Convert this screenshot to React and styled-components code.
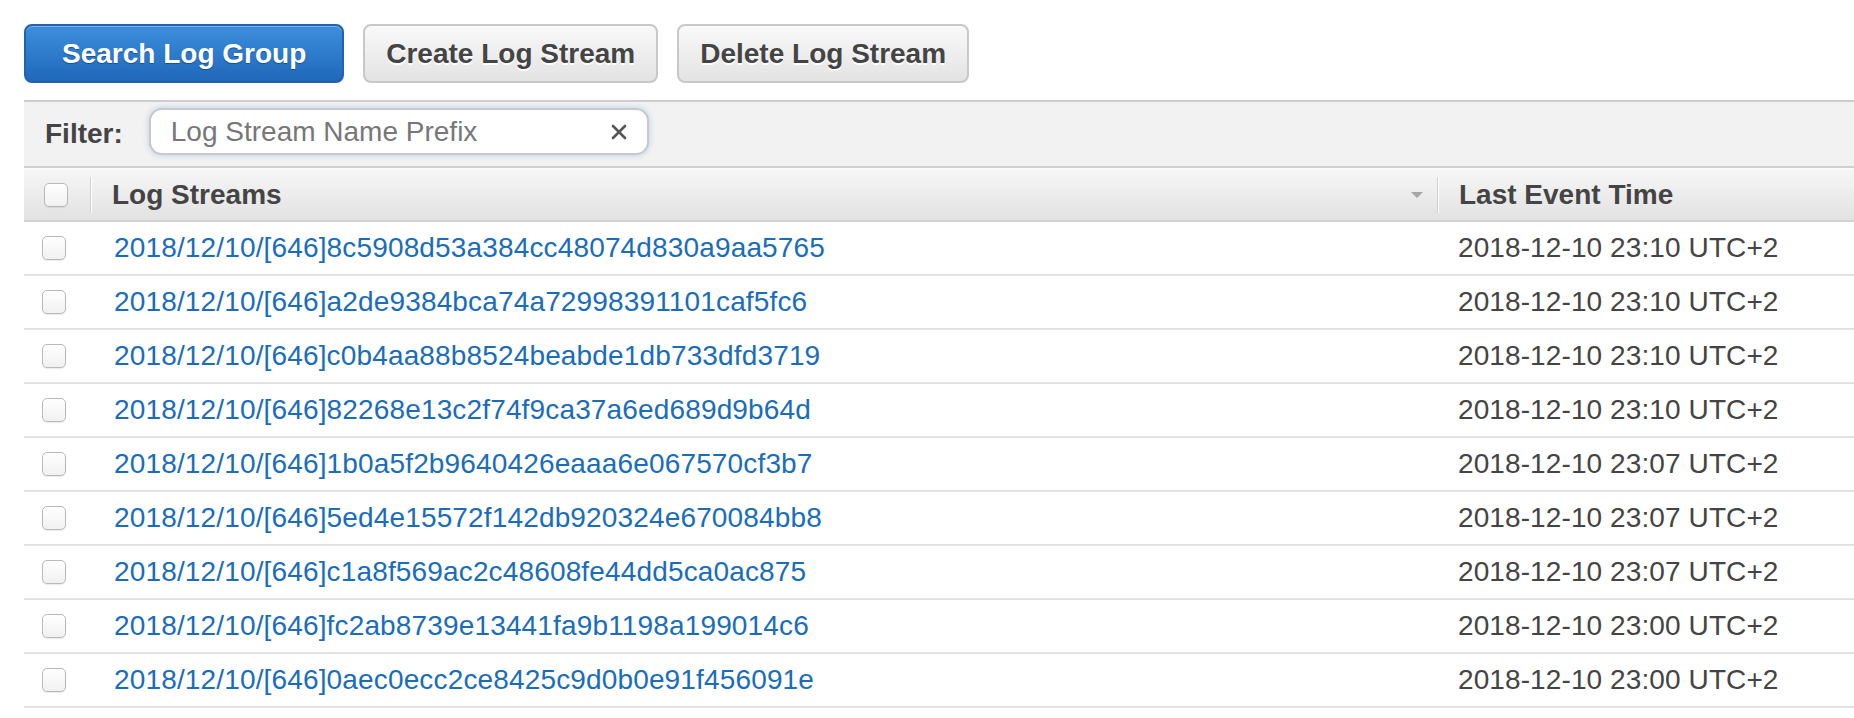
import React, { useState } from 'react';
import styled, { createGlobalStyle } from 'styled-components';

const GlobalStyle = createGlobalStyle`
  html, body {
    margin: 0;
    padding: 0;
    background: #fff;
    font-family: "Liberation Sans", Arial, Helvetica, sans-serif;
    overflow: hidden;
  }
`;

const Page = styled.div`
  padding: 24px 0 0 24px;
`;

const Toolbar = styled.div`
  display: flex;
  gap: 19px;
  margin-bottom: 17px;
`;

const Button = styled.button`
  height: 59px;
  padding: 0 ${(p) => (p.$wide ? '36px' : '21px')};
  border-radius: 8px;
  font-family: inherit;
  font-size: 28px;
  font-weight: bold;
  cursor: pointer;
  border: 2px solid ${(p) => (p.$primary ? '#1f62ad' : '#c8c8c8')};
  background: ${(p) =>
    p.$primary
      ? 'linear-gradient(#3d8fde, #1f67ba)'
      : 'linear-gradient(#f9f9f9, #e3e3e3)'};
  color: ${(p) => (p.$primary ? '#fff' : '#444')};
  text-shadow: ${(p) =>
    p.$primary ? '0 1px 1px rgba(0, 40, 100, 0.5)' : '0 2px 0 #fff'};
  box-shadow: inset 0 1px 0 rgba(255, 255, 255, 0.35);
`;

const Panel = styled.div`
  border-top: 2px solid #cecece;
`;

const FilterBar = styled.div`
  display: flex;
  align-items: flex-start;
  gap: 26px;
  height: 66px;
  padding: 6px 0 0 21px;
  box-sizing: border-box;
  background: #f2f2f2;
  border-bottom: 2px solid #cecece;
`;

const FilterLabel = styled.label`
  font-size: 28px;
  font-weight: bold;
  color: #444;
  line-height: 47px;
  padding-top: 2px;
`;

const SearchBox = styled.div`
  display: flex;
  align-items: center;
  width: 500px;
  height: 47px;
  box-sizing: border-box;
  padding: 0 20px;
  background: #fff;
  border: 2px solid #c9c9c9;
  border-radius: 13px;
  box-shadow: 0 0 6px rgba(110, 165, 225, 0.45);
`;

const SearchInput = styled.input`
  flex: 1;
  border: none;
  outline: none;
  background: transparent;
  font-family: inherit;
  font-size: 28px;
  color: #444;
  padding: 0;

  &::placeholder {
    color: #777;
  }
`;

const ClearIcon = styled.svg`
  width: 16px;
  height: 16px;
  flex: none;
`;

const Grid = styled.div`
  display: grid;
  grid-template-columns: 66px 1347px 1fr;
  align-items: center;
`;

const HeaderRow = styled(Grid)`
  height: 50px;
  background: linear-gradient(#f6f6f6, #e2e2e2);
  border-top: 2px solid #fafafa;
  border-bottom: 2px solid #d2d2d2;
`;

const Row = styled(Grid)`
  height: 52px;
  border-bottom: 2px solid #e1e1e1;
`;

const CheckCell = styled.div`
  display: flex;
  align-items: center;
  height: 100%;
  padding-left: ${(p) => (p.$header ? '20px' : '18px')};
`;

const Checkbox = styled.span`
  display: block;
  width: 22px;
  height: 22px;
  border: 1px solid #b9b9b9;
  border-radius: 5px;
  background: linear-gradient(#fff, #f1f1f1);
  box-shadow: 0 1px 1px rgba(0, 0, 0, 0.08);
`;

const HeaderCell = styled.div`
  display: flex;
  align-items: center;
  justify-content: space-between;
  height: 36px;
  padding: 0 14px 0 21px;
  border-left: ${(p) => (p.$sep ? '1px solid #d0d0d0' : 'none')};
  box-shadow: ${(p) => (p.$sep ? 'inset 1px 0 0 #fff' : 'none')};
  font-size: 28px;
  font-weight: bold;
  color: #444;
`;

const SortArrow = styled.span`
  width: 0;
  height: 0;
  border-left: 6px solid transparent;
  border-right: 6px solid transparent;
  border-top: 6px solid #a6a6a6;
`;

const StreamLink = styled.a`
  padding-left: 24px;
  font-size: 28px;
  letter-spacing: 0.15px;
  color: #1a6dbb;
  text-decoration: none;
  cursor: pointer;
  white-space: nowrap;
`;

const TimeCell = styled.div`
  padding-left: 21px;
  font-size: 28px;
  letter-spacing: 0.1px;
  color: #444;
  white-space: nowrap;
`;

const streams = [
  ['8c5908d53a384cc48074d830a9aa5765', '23:10'],
  ['a2de9384bca74a72998391101caf5fc6', '23:10'],
  ['c0b4aa88b8524beabde1db733dfd3719', '23:10'],
  ['82268e13c2f74f9ca37a6ed689d9b64d', '23:10'],
  ['1b0a5f2b9640426eaaa6e067570cf3b7', '23:07'],
  ['5ed4e15572f142db920324e670084bb8', '23:07'],
  ['c1a8f569ac2c48608fe44dd5ca0ac875', '23:07'],
  ['fc2ab8739e13441fa9b1198a199014c6', '23:00'],
  ['0aec0ecc2ce8425c9d0b0e91f456091e', '23:00'],
];

const App = () => {
  const [prefix, setPrefix] = useState('');

  return (
    <Page>
      <GlobalStyle />
      <Toolbar>
        <Button $primary $wide>Search Log Group</Button>
        <Button>Create Log Stream</Button>
        <Button>Delete Log Stream</Button>
      </Toolbar>
      <Panel>
        <FilterBar>
          <FilterLabel>Filter:</FilterLabel>
          <SearchBox>
            <SearchInput
              value={prefix}
              onChange={(e) => setPrefix(e.target.value)}
              placeholder="Log Stream Name Prefix"
            />
            <ClearIcon viewBox="0 0 16 16" onClick={() => setPrefix('')}>
              <path
                d="M2 2 L14 14 M14 2 L2 14"
                stroke="#555"
                strokeWidth="2.6"
                strokeLinecap="round"
              />
            </ClearIcon>
          </SearchBox>
        </FilterBar>
        <HeaderRow>
          <CheckCell $header>
            <Checkbox />
          </CheckCell>
          <HeaderCell $sep>
            Log Streams
            <SortArrow />
          </HeaderCell>
          <HeaderCell $sep>Last Event Time</HeaderCell>
        </HeaderRow>
        {streams.map(([id, time]) => (
          <Row key={id}>
            <CheckCell>
              <Checkbox />
            </CheckCell>
            <StreamLink>2018/12/10/[646]{id}</StreamLink>
            <TimeCell>2018-12-10 {time} UTC+2</TimeCell>
          </Row>
        ))}
      </Panel>
    </Page>
  );
};

export default App;
